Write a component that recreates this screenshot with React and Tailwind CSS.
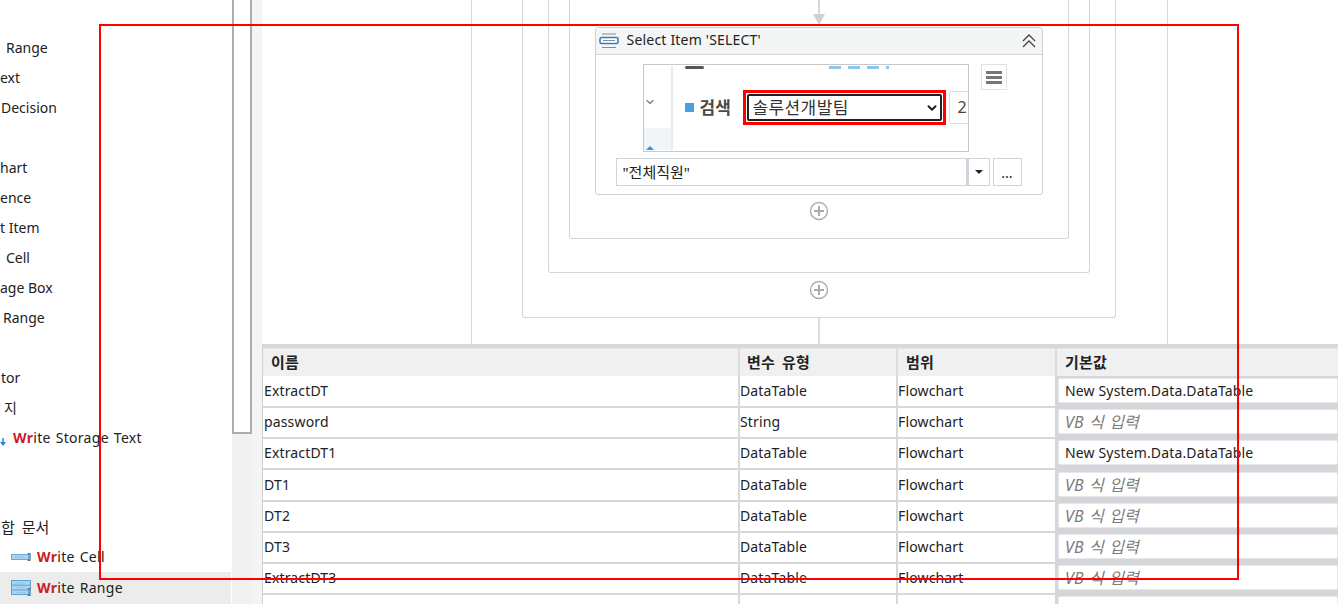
import { ChevronDown } from "lucide-react"

const FONT = "font-['Noto_Sans','Noto_Sans_CJK_KR',sans-serif]"

const sideRows = [
    { text: "", pad: "pl-0" },
    { text: "Range", pad: "pl-[6px]" },
    { text: "ext", pad: "pl-0" },
    { text: "Decision", pad: "pl-px" },
    { text: "", pad: "pl-0" },
    { text: "hart", pad: "pl-0" },
    { text: "ence", pad: "pl-0" },
    { text: "t Item", pad: "pl-0" },
    { text: "Cell", pad: "pl-[6px]" },
    { text: "age Box", pad: "pl-0" },
    { text: "Range", pad: "pl-[3px]" },
    { text: "", pad: "pl-0" },
    { text: "tor", pad: "pl-px" },
    { text: "지", pad: "pl-[4px]" },
]

const vars = [
    { name: "ExtractDT", type: "DataTable", def: "New System.Data.DataTable" },
    { name: "password", type: "String" },
    { name: "ExtractDT1", type: "DataTable", def: "New System.Data.DataTable", tall: true },
    { name: "DT1", type: "DataTable" },
    { name: "DT2", type: "DataTable" },
    { name: "DT3", type: "DataTable" },
    { name: "ExtractDT3", type: "DataTable" },
    { name: "", type: "", partial: true },
]

const PlusCircle = () => (
    <svg width="20" height="20" viewBox="0 0 20 20" fill="none" stroke="#ababab">
        <circle cx="10" cy="10" r="8.5" strokeWidth="1.4" />
        <path d="M10 5v10M5 10h10" strokeWidth="2" />
    </svg>
)

const WriteCellIcon = () => (
    <svg width="21" height="9" viewBox="0 0 21 9" className="shrink-0">
        <rect x="0.5" y="1.5" width="19" height="5" fill="#a9d3ee" stroke="#6aa9d6" />
        <path d="M4 4h9" stroke="#7fb4d8" strokeWidth="1" strokeDasharray="2 1" />
        <path d="M18 0.5v7M16.5 0.5h3M16.5 7.5h3" stroke="#6b6f78" strokeWidth="1" />
    </svg>
)

const WriteRangeIcon = () => (
    <svg width="21" height="16" viewBox="0 0 21 16" className="shrink-0">
        <rect x="0.5" y="0.5" width="19" height="14" fill="#a9d3ee" stroke="#5fa3d6" />
        <path d="M1 5.2h18M1 10h18" stroke="#5fa3d6" />
        <path d="M6 3h8M6 8h8M6 12.5h8" stroke="#8fc0e0" strokeDasharray="2 1" />
        <path d="M18 8.5v7M16.5 8.5h3M16.5 15.5h3" stroke="#6b6f78" />
    </svg>
)

const SelectIcon = () => (
    <svg width="20" height="16" viewBox="0 0 20 16" className="shrink-0">
        <path d="M3 1h14M3 14.5h14" stroke="#8a8a8a" strokeWidth="1.2" />
        <rect x="1" y="4.5" width="18" height="6" rx="1.5" fill="#fff" stroke="#2f7fd0" strokeWidth="1.6" />
        <path d="M4 7.5h12" stroke="#8a8a8a" strokeWidth="1.2" />
    </svg>
)

const WriteLabel = ({ rest }) => (
    <span className="whitespace-nowrap tracking-[0.3px] [word-spacing:1px]">
        <span className="font-bold text-[#c9201f]">Wr</span>ite {rest}
    </span>
)

const Sidebar = () => (
    <aside className="w-[232px] shrink-0 h-[604px] overflow-hidden bg-white text-[14px] leading-[30px] text-[#222]">
        {sideRows.map((row, i) => (
            <div key={i} className={"h-[30px] whitespace-nowrap first:h-[33px] " + row.pad}>{row.text}</div>
        ))}
        <div className="h-[30px] flex items-center gap-[7px]">
            <svg width="6" height="8" viewBox="0 0 6 8" className="mt-[7px] shrink-0">
                <path d="M3 0v4" stroke="#2f7fd0" strokeWidth="1.5" />
                <path d="M0 4h6L3 8z" fill="#2f7fd0" />
            </svg>
            <WriteLabel rest="Storage Text" />
        </div>
        <div className="h-[59px]" />
        <div className="h-[30px] pl-px text-[15px] [word-spacing:3px]">합 문서</div>
        <div className="h-[30px] flex items-center gap-[5px] pl-[11px]">
            <WriteCellIcon />
            <WriteLabel rest="Cell" />
        </div>
        <div className="h-[32px] w-[231px] flex items-center gap-[5px] pl-[11px] bg-[#ececec]">
            <WriteRangeIcon />
            <WriteLabel rest="Range" />
        </div>
    </aside>
)

const Scrollbar = () => (
    <div className="w-[30px] shrink-0 flex h-[604px]">
        <div className="w-[20px] bg-[#f1f1f1]">
            <div className="h-[434px] bg-white border-x-2 border-b-2 border-[#adadad]" />
        </div>
        <div className="flex-1 bg-[#f4f4f4]" />
    </div>
)

const Preview = () => (
    <div className="ml-[47px] w-[326px] h-[88px] border border-[#c8c8c8] bg-white flex overflow-hidden">
        <div className="w-[29px] shrink-0 h-[84px] mt-px border-r-2 border-[#e6ecf2] flex flex-col">
            <div className="h-[62px] pt-[30px]">
                <ChevronDown size={12} strokeWidth={3} className="text-[#8a8a8a]" />
            </div>
            <div className="flex-1 bg-[#f2f5f8] flex items-end pl-[2px]">
                <div className="w-0 h-0 border-x-[4px] border-x-transparent border-b-[4px] border-b-[#3d8fd6]" />
            </div>
        </div>
        <div className="flex-1 min-w-0 overflow-hidden">
            <div className="h-[5px] flex items-start pl-[12px]">
                <div className="w-[19px] h-[3px] mt-[1px] bg-[#555] rounded-sm" />
                <div className="ml-[125px] mt-[1px] flex gap-[7px]">
                    <div className="w-[12px] h-[3px] bg-[#8ec5ee]" />
                    <div className="w-[12px] h-[3px] bg-[#8ec5ee]" />
                    <div className="w-[12px] h-[3px] bg-[#8ec5ee]" />
                    <div className="w-[3px] h-[3px] bg-[#8ec5ee]" />
                </div>
            </div>
            <div className="flex items-center mt-[20px] pl-[12px]">
                <div className="w-[9px] h-[9px] bg-[#4a9fe0] shrink-0" />
                <span className="ml-[6px] w-[43px] shrink-0 text-[17px] leading-[22px] font-bold text-[#4a4a4a] whitespace-nowrap">검색</span>
                <div className="w-[203px] h-[35px] shrink-0 border-[3px] border-[#f00] p-px bg-white">
                    <div className="h-full border-2 border-[#222] rounded-[2px] flex items-center justify-between pl-[4px] pr-[1px] text-[17px] tracking-[0.4px] text-[#333]">
                        <span className="whitespace-nowrap">솔루션개발팀</span>
                        <ChevronDown size={14} strokeWidth={3.5} className="text-[#222]" />
                    </div>
                </div>
                <div className="ml-[3px] w-[30px] h-[33px] shrink-0 border border-[#ddd] rounded-[3px] pl-[8px] text-[16px] leading-[31px] text-[#444]">2</div>
            </div>
        </div>
    </div>
)

const SelectCard = () => (
    <div className="w-[448px] h-[168px] shrink-0 border border-[#cfcfcf] rounded-[3px] bg-white overflow-hidden">
        <div className="h-[27px] bg-[#f4f6f6] border-b border-[#d4d4d4] flex items-center pl-[3px] pr-[6px]">
            <SelectIcon />
            <span className="ml-[8px] pb-[3px] text-[14px] tracking-[0.2px] text-[#222] whitespace-nowrap">Select Item 'SELECT'</span>
            <svg width="14" height="14" viewBox="0 0 14 14" fill="none" stroke="#444" strokeWidth="1.3" className="ml-auto">
                <path d="M1 7l6-6 6 6M1 13l6-6 6 6" />
            </svg>
        </div>
        <div className="flex items-start pt-[9px]">
            <Preview />
            <div className="ml-[12px] w-[26px] h-[26px] border border-[#dde1e8] flex flex-col items-center justify-center gap-[2px]">
                <div className="w-[16px] h-[3px] bg-[#777]" />
                <div className="w-[16px] h-[3px] bg-[#777]" />
                <div className="w-[16px] h-[3px] bg-[#777]" />
            </div>
        </div>
        <div className="flex mt-[6px] pl-[20px] h-[28px] text-[15px] text-[#222]">
            <div className="w-[353px] border border-[#cfd3da] border-r-[3px] pl-[6px] leading-[26px] whitespace-nowrap">"전체직원"</div>
            <div className="w-[21px] border-y border-r border-[#cfd3da] flex items-center justify-center">
                <div className="w-0 h-0 border-x-[4px] border-x-transparent border-t-[4px] border-t-[#222]" />
            </div>
            <div className="ml-[3px] w-[29px] border border-[#cfd3da] text-center text-[14px] leading-[28px]">...</div>
        </div>
    </div>
)

const Canvas = () => (
    <div className="h-[344px] shrink-0 bg-white overflow-hidden">
        <div className="ml-[209px] w-[697px] h-[344px] pr-[2px] border-x border-[#d8d8d8] flex flex-col items-center">
            <div className="w-[594px] h-[318px] shrink-0 border-x border-b border-[#d5d5d5] rounded-b-[3px] flex flex-col items-center">
                <div className="w-[542px] h-[273px] shrink-0 border-x border-b border-[#d5d5d5] rounded-b-[3px] flex flex-col items-center">
                    <div className="w-[500px] h-[239px] shrink-0 border-x border-b border-[#d5d5d5] rounded-b-[3px] flex flex-col items-center">
                        <div className="h-[27px] shrink-0 flex flex-col items-center">
                            <div className="w-[2px] h-[14px] bg-[#d8d8d8]" />
                            <div className="w-0 h-0 border-x-[6px] border-x-transparent border-t-[11px] border-t-[#d0d0d0]" />
                        </div>
                        <SelectCard />
                        <div className="mt-[6px]"><PlusCircle /></div>
                    </div>
                </div>
                <div className="mt-[7px]"><PlusCircle /></div>
            </div>
            <div className="w-[2px] flex-1 bg-[#dcdcdc]" />
        </div>
    </div>
)

const VarTable = () => (
    <div className="flex-1 min-h-0 overflow-hidden border-t-[4px] border-[#d8d8d8] border-l border-l-[#d0d0d0] text-[14px] tracking-[0.15px] text-[#222]">
        <div className="grid grid-cols-[475px_158px_159px_1fr] h-[28px] bg-[#f0f0f0] border-t border-[#e4e4e4] font-bold text-[15px] [word-spacing:3px] leading-[26px]">
            <div className="pl-[8px] whitespace-nowrap">이름</div>
            <div className="pl-[7px] border-l-2 border-[#dcdcdc] whitespace-nowrap">변수 유형</div>
            <div className="pl-[8px] border-l-2 border-[#dcdcdc] whitespace-nowrap">범위</div>
            <div className="pl-[8px] border-l-2 border-[#dcdcdc] whitespace-nowrap">기본값</div>
        </div>
        {vars.map((v, i) => (
            <div key={i} className={"grid grid-cols-[475px_158px_159px_1fr] leading-[30px] " + (v.tall ? "h-[32px]" : "h-[31px]")}>
                <div className="pl-px border-b-2 border-[#d8d8d8] whitespace-nowrap">{v.name}</div>
                <div className="border-l-2 border-b-2 border-[#d8d8d8] whitespace-nowrap">{v.type}</div>
                <div className="border-l-2 border-b-2 border-[#d8d8d8]">{v.partial ? "" : "Flowchart"}</div>
                <div className="bg-[#d5d6da] pl-[3px] pt-[2px] pb-[4px]">
                    <div className="h-[25px] bg-white border border-[#e8e8ec] rounded-[2px] pl-[6px] leading-[24px] whitespace-nowrap">
                        {v.partial ? "" : v.def ? v.def : <span className="italic text-[16px] [word-spacing:1px] text-[#7b7b7b]">VB 식 입력</span>}
                    </div>
                </div>
            </div>
        ))}
    </div>
)

export default function App() {
    return (
        <div className={"relative w-[1338px] h-[604px] overflow-hidden bg-white flex " + FONT}>
            <Sidebar />
            <Scrollbar />
            <main className="flex-1 min-w-0 flex flex-col">
                <Canvas />
                <VarTable />
            </main>
            {/* red annotation box drawn over the screenshot */}
            <div className="absolute left-[99px] top-[24px] w-[1140px] h-[556px] border-2 border-[#f00] pointer-events-none" />
        </div>
    )
}
